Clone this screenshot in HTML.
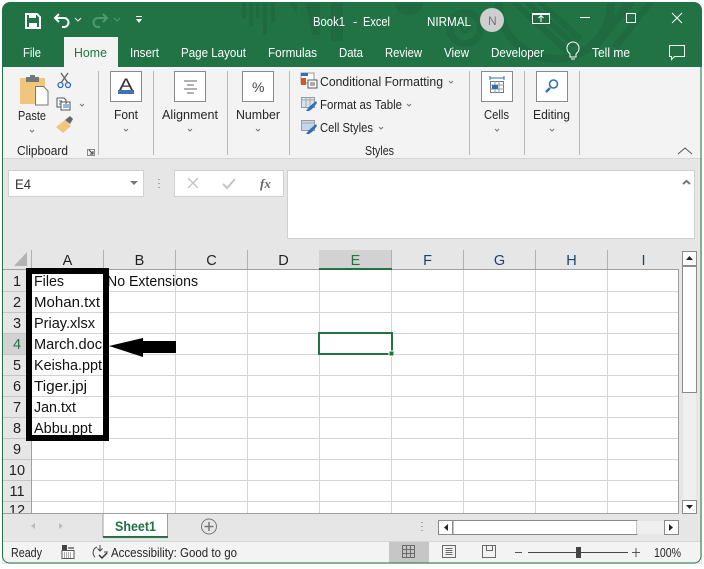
<!DOCTYPE html>
<html><head><meta charset="utf-8"><style>
html,body{margin:0;padding:0;background:#fff;width:704px;height:569px;overflow:hidden}
svg{display:block}
text{font-family:"Liberation Sans",sans-serif;font-size:13px;fill:#262626}
.w{fill:#fff}
.c{font-size:15px;fill:#111}
.h{font-size:14.500px;fill:#222;text-anchor:middle}
.l{stroke:#d4d4d4;stroke-width:1;fill:none;shape-rendering:crispEdges}
.s{stroke:#b8b8b8;stroke-width:1;shape-rendering:crispEdges}
.b{fill:#fff;stroke:#8a8a8a;stroke-width:1;shape-rendering:crispEdges}
.ch{fill:none;stroke:#777;stroke-width:1}
</style></head><body>
<svg width="704" height="569" viewBox="0 0 704 569" xmlns="http://www.w3.org/2000/svg">
<rect width="704" height="569" fill="#fff"/>
<path d="M2 564V10a8 8 0 0 1 8-8H694a8 8 0 0 1 8 8V564Z" fill="#e6e6e6"/>
<path d="M2 67V10a8 8 0 0 1 8-8H694a8 8 0 0 1 8 8V67Z" fill="#217346"/>
<!-- title pattern -->
<svg x="2" y="3" width="700" height="64" viewBox="2 3 700 64">
<g fill="#1f6a41">
<rect x="242" y="3" width="4" height="16"/><rect x="249" y="3" width="4" height="23"/><rect x="256" y="3" width="3" height="15"/><rect x="263" y="3" width="4" height="32"/><rect x="271" y="3" width="4" height="20"/>
<path d="M290 3h7v13z"/><path d="M306 3h14v32h-8z"/><rect x="331" y="3" width="12" height="38"/>
<path d="M395 3h28a14 12 0 0 1-28 0z"/>
<path d="M590 46l34-43h11l-38 47zM612 46l34-43h8l-36 46z"/>
<path d="M511 3h8l52 46-6 5zM524 3h8l46 40-5 5zM537 3h8l38 34-5 5z"/>
</g>
<circle cx="465" cy="28" r="15.500" fill="none" stroke="#1f6a41" stroke-width="7"/>
<circle cx="465" cy="28" r="4" fill="none" stroke="#1f6a41" stroke-width="3"/>
<circle cx="555" cy="3" r="56" fill="none" stroke="#1f6a41" stroke-width="8"/>
</svg>
<rect x="64" y="37" width="54" height="31" fill="#f3f3f3"/>
<rect x="2" y="67" width="700" height="91" fill="#f3f3f3"/>
<rect x="2" y="158" width="700" height="1" fill="#d6d6d6"/>
<!-- QAT -->
<path d="M26 14h11l3 3v11H26Z" fill="none" stroke="#fff" stroke-width="2"/>
<rect x="29" y="14" width="7" height="4" fill="#fff"/><rect x="29" y="23" width="8" height="5" fill="#fff"/>
<path d="M59 14l-4 4 4 4M55 18h9a4.500 4.500 0 0 1 0 9h-2" fill="none" stroke="#fff" stroke-width="2"/>
<path d="M75 18l3 3 3-3" fill="none" stroke="#e8f0eb" stroke-width="1"/>
<path d="M103 14l4 4-4 4M107 18h-9a4.500 4.500 0 0 0 0 9h2" fill="none" stroke="#4e9a70" stroke-width="2"/>
<path d="M114 18l3 3 3-3" fill="none" stroke="#4e9a70" stroke-width="1"/>
<rect x="136" y="16" width="6" height="1" fill="#fff"/><path d="M136 19h6l-3 4z" fill="#fff"/>
<!-- title text -->
<text class="w" x="313" y="26" textLength="32" lengthAdjust="spacingAndGlyphs">Book1</text>
<text class="w" x="353" y="26">-</text>
<text class="w" x="363" y="26" textLength="27" lengthAdjust="spacingAndGlyphs">Excel</text>
<text class="w" x="427" y="26" textLength="44" lengthAdjust="spacingAndGlyphs">NIRMAL</text>
<circle cx="492" cy="20" r="12" fill="#cfcfcf"/>
<text x="488" y="25" style="font-size:12px;fill:#7a6a8a">N</text>
<!-- window controls -->
<rect x="532.500" y="14.500" width="17" height="9" fill="none" stroke="#fff"/><rect x="532" y="13" width="18" height="2" fill="#fff"/>
<path d="M541 22v-6M538.500 18l2.500-2.500 2.500 2.500" fill="none" stroke="#fff"/>
<rect x="580" y="17" width="10" height="1" fill="#fff"/>
<rect x="626.500" y="13.500" width="9" height="9" fill="none" stroke="#fff"/>
<path d="M672 13l10 10M682 13l-10 10" stroke="#fff" fill="none"/>
<!-- tabs -->
<text class="w" x="23" y="57" textLength="18" lengthAdjust="spacingAndGlyphs">File</text>
<text x="74" y="57" textLength="33" lengthAdjust="spacingAndGlyphs" style="fill:#217346">Home</text>
<text class="w" x="130" y="57" textLength="29" lengthAdjust="spacingAndGlyphs">Insert</text>
<text class="w" x="181" y="57" textLength="65" lengthAdjust="spacingAndGlyphs">Page Layout</text>
<text class="w" x="268" y="57" textLength="49" lengthAdjust="spacingAndGlyphs">Formulas</text>
<text class="w" x="339" y="57" textLength="24" lengthAdjust="spacingAndGlyphs">Data</text>
<text class="w" x="385" y="57" textLength="37" lengthAdjust="spacingAndGlyphs">Review</text>
<text class="w" x="444" y="57" textLength="25" lengthAdjust="spacingAndGlyphs">View</text>
<text class="w" x="491" y="57" textLength="53" lengthAdjust="spacingAndGlyphs">Developer</text>
<path d="M570 57v-3c-2-2-3-3-3-6a6 6 0 0 1 12 0c0 3-1 4-3 6v3Z" fill="none" stroke="#fff"/><path d="M571 59h4" stroke="#fff"/>
<text class="w" x="592" y="57" textLength="38" lengthAdjust="spacingAndGlyphs">Tell me</text>
<path d="M669.500 45.500h15v11h-10l-3 3v-3h-2Z" fill="none" stroke="#fff"/>
<!-- clipboard group -->
<path d="M20 78h25v26H20Z" fill="#eec67c"/><rect x="26" y="77" width="13" height="5" fill="#777"/><rect x="30" y="75" width="5" height="3" fill="#777"/>
<path d="M35.500 86.500h8l4.500 4.500v14H35.500Z" fill="#fff" stroke="#777"/>
<text x="18" y="120" textLength="28" lengthAdjust="spacingAndGlyphs">Paste</text>
<path class="ch" d="M30 130l2 2 2-2"/>
<circle cx="60.500" cy="85" r="2.500" fill="none" stroke="#2f6fb5" stroke-width="1.300"/><circle cx="68" cy="85" r="2.500" fill="none" stroke="#2f6fb5" stroke-width="1.300"/>
<path d="M61 83l7-10M68 83l-7-10" stroke="#666" stroke-width="1.400"/>
<path d="M57 98h7l2 2v4M57 98v9h4M61 102h9v8h-9Z" fill="#fff" stroke="#555"/><path d="M59 101h3M59 104h2M63 105h6M63 107h6" stroke="#2f6fb5"/>
<path class="ch" d="M80 104l2 2 2-2"/>
<path d="M56 127l9-7 6 6-8 7Z" fill="#eec67c"/><path d="M65 120l5-4 3 3-3 5Z" fill="#666"/>
<text x="17" y="155" textLength="51" lengthAdjust="spacingAndGlyphs">Clipboard</text>
<rect x="87.500" y="149.500" width="7" height="6" fill="none" stroke="#888"/><path d="M89 150l4 4M93 151v3h-3" stroke="#444" fill="none"/>
<line class="s" x1="98.500" y1="71" x2="98.500" y2="155"/>
<!-- boxes -->
<rect class="b" x="110.500" y="71.500" width="31" height="30"/>
<text x="119" y="90" style="font-size:17px;fill:#333" textLength="14" lengthAdjust="spacingAndGlyphs">A</text>
<rect x="118" y="90" width="16" height="4" fill="#4472b0"/>
<text x="114" y="119" textLength="24" lengthAdjust="spacingAndGlyphs">Font</text>
<path class="ch" d="M124 129l2 2 2-2"/>
<line class="s" x1="153.500" y1="71" x2="153.500" y2="155"/>
<rect class="b" x="174.500" y="71.500" width="31" height="30"/>
<path d="M184 81h13M187 85h7M184 89h13M187 93h7" stroke="#666" shape-rendering="crispEdges"/>
<text x="162" y="119" textLength="56" lengthAdjust="spacingAndGlyphs">Alignment</text>
<path class="ch" d="M188 129l2 2 2-2"/>
<line class="s" x1="227.500" y1="71" x2="227.500" y2="155"/>
<rect class="b" x="242.500" y="71.500" width="31" height="30"/>
<text x="252" y="92" style="font-size:14px;fill:#444">%</text>
<text x="236" y="119" textLength="44" lengthAdjust="spacingAndGlyphs">Number</text>
<path class="ch" d="M256 129l2 2 2-2"/>
<line class="s" x1="289.500" y1="71" x2="289.500" y2="155"/>
<!-- styles -->
<rect x="301" y="73" width="13" height="10" fill="#fff" stroke="#999"/><rect x="301" y="73" width="7" height="3" fill="#2f6fb5"/><rect x="301" y="78" width="5" height="7" fill="#d9542b"/>
<rect x="308" y="80" width="9" height="8" fill="#fff" stroke="#555"/><path d="M310 83h5M310 85h5" stroke="#555"/>
<text x="320" y="86" textLength="123" lengthAdjust="spacingAndGlyphs">Conditional Formatting</text>
<path class="ch" d="M449 81l2 2 2-2"/>
<rect x="301.500" y="97.500" width="13" height="10" fill="#d7e3f0" stroke="#999"/><path d="M301 100h14M306 97v11M310 97v11" stroke="#aaa"/>
<path d="M306 111l3-4 7-6 1 2-5 6-3 2Z" fill="#2f6fb5"/>
<text x="320" y="109" textLength="82" lengthAdjust="spacingAndGlyphs">Format as Table</text>
<path class="ch" d="M407 104l2 2 2-2"/>
<rect x="301.500" y="120.500" width="13" height="10" fill="#c6d6ea" stroke="#999"/><path d="M301 123h14" stroke="#aaa"/>
<path d="M306 134l3-4 7-6 1 2-5 6-3 2Z" fill="#2f6fb5"/>
<text x="320" y="132" textLength="53" lengthAdjust="spacingAndGlyphs">Cell Styles</text>
<path class="ch" d="M379 127l2 2 2-2"/>
<text x="365" y="155" textLength="29" lengthAdjust="spacingAndGlyphs">Styles</text>
<line class="s" x1="469.500" y1="71" x2="469.500" y2="155"/>
<!-- cells -->
<rect class="b" x="481.500" y="71.500" width="31" height="30"/>
<path d="M490 78h14M490 76v4M504 76v4" stroke="#2f6fb5" fill="none"/>
<rect x="490.500" y="81.500" width="13" height="11" fill="#fff" stroke="#777"/><path d="M490 85h14M490 89h14M495 81v12M499 81v12" stroke="#999"/><rect x="492" y="85" width="6" height="4" fill="#2f6fb5"/>
<text x="484" y="119" textLength="25" lengthAdjust="spacingAndGlyphs">Cells</text>
<path class="ch" d="M495 129l2 2 2-2"/>
<line class="s" x1="524.500" y1="71" x2="524.500" y2="155"/>
<rect class="b" x="536.500" y="71.500" width="31" height="30"/>
<circle cx="553.500" cy="84" r="4" fill="none" stroke="#2f6fb5" stroke-width="1.600"/><path d="M550 88l-4 4" stroke="#2f6fb5" stroke-width="2.400"/>
<text x="533" y="119" textLength="37" lengthAdjust="spacingAndGlyphs">Editing</text>
<path class="ch" d="M550 129l2 2 2-2"/>
<line class="s" x1="579.500" y1="71" x2="579.500" y2="155"/>
<path d="M678 154l7-6 7 6" fill="none" stroke="#555"/>
<!-- formula bar -->
<rect x="8.500" y="170.500" width="135" height="26" fill="#fff" stroke="#d0d0d0"/>
<text x="15" y="189" style="font-size:14px;fill:#333" textLength="16" lengthAdjust="spacingAndGlyphs">E4</text>
<path d="M130 181h8l-4 4z" fill="#777"/>
<path d="M159 179v1M159 183v1M159 187v1" stroke="#aaa" stroke-width="2"/>
<rect x="174.500" y="170.500" width="109" height="26" fill="#fff" stroke="#d0d0d0"/>
<path d="M188 178l10 10M198 178l-10 10" stroke="#c4c4c4" stroke-width="1.500"/>
<path d="M223 184l4 4 8-9" fill="none" stroke="#c4c4c4" stroke-width="2"/>
<text x="260" y="188" style="font-family:'Liberation Serif',serif;font-style:italic;font-weight:bold;font-size:13px;fill:#666">fx</text>
<rect x="287.500" y="170.500" width="407" height="68" fill="#fff" stroke="#d0d0d0"/>
<path d="M683 184l3.500-3 3.500 3" fill="none" stroke="#777" stroke-width="2"/>
<!-- column header -->
<rect x="3" y="250" width="676" height="20" fill="#e6e6e6"/>
<rect x="319" y="250" width="72" height="20" fill="#d2d2d2"/>
<path d="M27 266V252L14 266Z" fill="#b4b4b4"/>
<g stroke="#b0b0b0" shape-rendering="crispEdges">
<path d="M31.500 250v20M103.500 250v20M175.500 250v20M247.500 250v20M391.500 250v20M463.500 250v20M535.500 250v20M607.500 250v20"/>
</g>
<text class="h" x="67.500" y="265">A</text><text class="h" x="139.500" y="265">B</text><text class="h" x="211.500" y="265">C</text><text class="h" x="283.500" y="265">D</text>
<text class="h" x="355.500" y="265" style="fill:#217346">E</text><text class="h" x="427.500" y="265" style="fill:#16456e">F</text><text class="h" x="499.500" y="265" style="fill:#16456e">G</text><text class="h" x="571.500" y="265" style="fill:#16456e">H</text><text class="h" x="643.500" y="265" style="fill:#16456e">I</text>
<!-- grid -->
<rect x="32" y="270" width="647" height="243" fill="#fff"/>
<rect x="3" y="270" width="29" height="243" fill="#e6e6e6"/>
<rect x="3" y="334" width="29" height="20" fill="#d2d2d2"/>
<path class="l" d="M32 291.500H679M32 312.500H679M32 333.500H679M32 354.500H679M32 375.500H679M32 396.500H679M32 417.500H679M32 438.500H679M32 459.500H679M32 480.500H679M32 501.500H679"/>
<path class="l" d="M103.500 270V513M175.500 270V513M247.500 270V513M319.500 270V513M391.500 270V513M463.500 270V513M535.500 270V513M607.500 270V513"/>
<path d="M3 269.500H679M678.500 270V513M3 513.500H679M31.500 270V513" stroke="#a0a0a0" fill="none" shape-rendering="crispEdges"/>
<path d="M3 291.500H31M3 312.500H31M3 333.500H31M3 354.500H31M3 375.500H31M3 396.500H31M3 417.500H31M3 438.500H31M3 459.500H31M3 480.500H31M3 501.500H31" stroke="#c4c4c4" shape-rendering="crispEdges"/>
<rect x="319" y="268" width="73" height="2" fill="#217346"/>
<g class="rn">
<text class="h" x="17" y="286">1</text><text class="h" x="17" y="307">2</text><text class="h" x="17" y="328">3</text><text class="h" x="17" y="349" style="fill:#217346">4</text><text class="h" x="17" y="370">5</text><text class="h" x="17" y="391">6</text><text class="h" x="17" y="412">7</text><text class="h" x="17" y="433">8</text><text class="h" x="17" y="454">9</text><text class="h" x="17" y="475">10</text><text class="h" x="17" y="496">11</text>
</g>
<svg x="3" y="502" width="29" height="11"><text class="h" x="14" y="13">12</text></svg>
<!-- cells text -->
<text class="c" x="34" y="286" textLength="30" lengthAdjust="spacingAndGlyphs">Files</text>
<text class="c" x="107" y="286" textLength="91" lengthAdjust="spacingAndGlyphs">No Extensions</text>
<text class="c" x="34" y="307" textLength="66" lengthAdjust="spacingAndGlyphs">Mohan.txt</text>
<text class="c" x="34" y="328" textLength="61" lengthAdjust="spacingAndGlyphs">Priay.xlsx</text>
<text class="c" x="34" y="349" textLength="68" lengthAdjust="spacingAndGlyphs">March.doc</text>
<text class="c" x="34" y="370" textLength="68" lengthAdjust="spacingAndGlyphs">Keisha.ppt</text>
<text class="c" x="34" y="391" textLength="53" lengthAdjust="spacingAndGlyphs">Tiger.jpj</text>
<text class="c" x="34" y="412" textLength="42" lengthAdjust="spacingAndGlyphs">Jan.txt</text>
<text class="c" x="34" y="433" textLength="58" lengthAdjust="spacingAndGlyphs">Abbu.ppt</text>
<!-- selection -->
<rect x="319" y="333" width="73" height="21" fill="none" stroke="#217346" stroke-width="2" shape-rendering="crispEdges"/>
<rect x="389" y="351" width="5" height="5" fill="#217346" stroke="#fff"/>
<!-- annotations -->
<rect x="29" y="271" width="77" height="167" fill="none" stroke="#000" stroke-width="6"/>
<path d="M109 346L143 338V341H176V353H143V357Z" fill="#000"/>
<!-- vertical scrollbar -->
<rect x="682.500" y="251.500" width="14" height="14" fill="#fff" stroke="#8a8a8a"/>
<path d="M686 260h7l-3.500-4z" fill="#222"/>
<rect x="682.500" y="266.500" width="14" height="126" fill="#fff" stroke="#8a8a8a"/>
<rect x="682.500" y="500.500" width="14" height="13" fill="#fff" stroke="#8a8a8a"/>
<path d="M686 505h7l-3.500 4z" fill="#222"/>
<rect x="683" y="393" width="13" height="107" fill="#efefef"/>
<!-- tabs row -->
<path d="M103 514h65v23h-65Z" fill="#fff"/>
<path d="M103 514V537M167.500 514V537" stroke="#a0a0a0" shape-rendering="crispEdges"/>
<rect x="103" y="536" width="65" height="2" fill="#217346"/>
<text x="115" y="531" textLength="41" lengthAdjust="spacingAndGlyphs" style="font-weight:bold;font-size:14px;fill:#217346">Sheet1</text>
<path d="M35 523v6l-4-3zM59 523v6l4-3z" fill="#bcbcbc"/>
<circle cx="209" cy="526.500" r="7.500" fill="none" stroke="#777"/>
<path d="M209 522v9M204.500 526.500h9" stroke="#777" stroke-width="1.500"/>
<path d="M422 522v1M422 526v1M422 530v1" stroke="#aaa" stroke-width="2"/>
<rect x="438.500" y="520.500" width="14" height="14" fill="#fff" stroke="#8a8a8a"/>
<path d="M448 524v7l-4-3.500z" fill="#222"/>
<rect x="453" y="520.500" width="184" height="14" fill="#fff" stroke="#8a8a8a"/>
<rect x="637" y="521" width="27" height="13" fill="#efefef"/>
<rect x="664.500" y="520.500" width="14" height="14" fill="#fff" stroke="#8a8a8a"/>
<path d="M669 524v7l4-3.500z" fill="#222"/>
<!-- status bar -->
<rect x="3" y="541" width="698" height="22" fill="#f3f3f3"/>
<rect x="3" y="541" width="698" height="1" fill="#d6d6d6"/>
<text x="11" y="557" textLength="31" lengthAdjust="spacingAndGlyphs">Ready</text>
<rect x="62" y="545" width="5" height="5" fill="#444"/><rect x="68" y="547" width="6" height="2" fill="#888"/>
<rect x="62" y="550.500" width="12" height="8" fill="#fff" stroke="#555"/><path d="M64 553h8M64 555h8M64 557h8" stroke="#555" stroke-dasharray="1 1"/>
<path d="M97 547a6 6 0 0 0-2 10" fill="none" stroke="#444"/>
<path d="M100 545v6M97.500 548.500l2.500 2.500 2.500-2.500M104 552h4" fill="none" stroke="#444"/>
<path d="M99 555l3 3 5-5" fill="none" stroke="#333" stroke-width="1.500"/>
<text x="111" y="557" textLength="126" lengthAdjust="spacingAndGlyphs">Accessibility: Good to go</text>
<rect x="389" y="542" width="40" height="21" fill="#c6c6c6"/>
<path d="M402.500 545.500h12v12h-12ZM402.500 549.500h12M402.500 553.500h12M406.500 545.500v12M410.500 545.500v12" fill="none" stroke="#6a6a6a" shape-rendering="crispEdges"/>
<rect x="442.500" y="545.500" width="13" height="12" fill="none" stroke="#6a6a6a"/><path d="M445.500 548.500h7M445.500 550.500h7M445.500 552.500h7M445.500 554.500h7" stroke="#6a6a6a" shape-rendering="crispEdges"/>
<path d="M482.500 545.500h13v12h-13ZM486.500 545.500v5h6v-5" fill="none" stroke="#6a6a6a" shape-rendering="crispEdges"/>
<rect x="515" y="552" width="7" height="1" fill="#555"/>
<rect x="528" y="552" width="100" height="1" fill="#444"/>
<rect x="576" y="547" width="5" height="11" fill="#444"/>
<path d="M632 552.500h8M636 548v9" stroke="#555" fill="none"/>
<text x="654" y="557" textLength="27" lengthAdjust="spacingAndGlyphs">100%</text>
<!-- window border -->
<path d="M2.500 10V556a7 7 0 0 0 7 7H694a7 7 0 0 0 7-7V10" fill="none" stroke="#217346"/>
</svg>
</body></html>
